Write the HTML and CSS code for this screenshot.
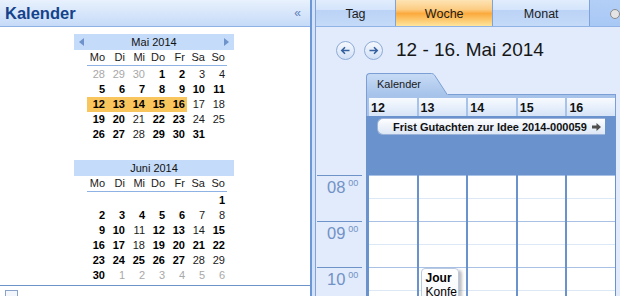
FILE: index.html
```html
<!DOCTYPE html>
<html lang="de">
<head>
<meta charset="UTF-8">
<title>Kalender</title>
<link rel="stylesheet" href="styles.css">
</head>
<body>
<div class="app">
    <aside class="nav-pane">
        <div class="pane-head">
            <span class="pane-title">Kalender</span>
            <span class="collapse">&laquo;</span>
        </div>
        <div class="months">
            <div class="mini">
                <div class="mini-head"><span class="arr arr-l"></span><span>Mai 2014</span><span class="arr arr-r"></span></div>
                <div class="mini-names"><span>Mo</span><span>Di</span><span>Mi</span><span>Do</span><span>Fr</span><span>Sa</span><span>So</span></div>
                <div class="mini-days">
                    <span class="g">28</span><span class="g">29</span><span class="g">30</span><span class="b">1</span><span class="b">2</span><span>3</span><span>4</span>
                    <span class="b">5</span><span class="b">6</span><span class="b">7</span><span class="b">8</span><span class="b">9</span><span class="b">10</span><span class="b">11</span>
                    <span class="b sel">12</span><span class="b sel">13</span><span class="b sel">14</span><span class="b sel">15</span><span class="b sel">16</span><span>17</span><span>18</span>
                    <span class="b">19</span><span class="b">20</span><span>21</span><span class="b">22</span><span class="b">23</span><span>24</span><span>25</span>
                    <span class="b">26</span><span class="b">27</span><span>28</span><span class="b">29</span><span class="b">30</span><span class="b">31</span><span></span>
                </div>
            </div>
            <div class="mini">
                <div class="mini-head"><span class="arr arr-l hide"></span><span>Juni 2014</span><span class="arr arr-r hide"></span></div>
                <div class="mini-names"><span>Mo</span><span>Di</span><span>Mi</span><span>Do</span><span>Fr</span><span>Sa</span><span>So</span></div>
                <div class="mini-days">
                    <span></span><span></span><span></span><span></span><span></span><span></span><span class="b">1</span>
                    <span class="b">2</span><span class="b">3</span><span class="b">4</span><span class="b">5</span><span class="b">6</span><span>7</span><span>8</span>
                    <span class="b">9</span><span class="b">10</span><span>11</span><span class="b">12</span><span class="b">13</span><span>14</span><span class="b">15</span>
                    <span class="b">16</span><span class="b">17</span><span>18</span><span class="b">19</span><span class="b">20</span><span class="b">21</span><span class="b">22</span>
                    <span class="b">23</span><span class="b">24</span><span class="b">25</span><span class="b">26</span><span class="b">27</span><span>28</span><span>29</span>
                    <span class="b">30</span><span class="g">1</span><span class="g">2</span><span class="g">3</span><span class="g">4</span><span class="g">5</span><span class="g">6</span>
                </div>
            </div>
        </div>
        <div class="pane-foot"><span class="foot-box"></span></div>
    </aside>

    <div class="splitter"></div>

    <main class="view">
        <div class="tabs">
            <div class="tab tab-day">Tag</div>
            <div class="tab tab-week active">Woche</div>
            <div class="tab tab-month">Monat</div>
            <div class="tab tab-more"><span class="more-icon"></span></div>
        </div>

        <div class="range">
            <span class="round-btn">
                <svg width="17" height="17" viewBox="0 0 17 17"><path d="M12.5 8.5H5 M8 5.3L4.8 8.5L8 11.7" fill="none" stroke="#35609f" stroke-width="1.6"/></svg>
            </span>
            <span class="round-btn">
                <svg width="17" height="17" viewBox="0 0 17 17"><path d="M4.5 8.5H12 M9 5.3L12.2 8.5L9 11.7" fill="none" stroke="#35609f" stroke-width="1.6"/></svg>
            </span>
            <span class="range-text">12 - 16. Mai 2014</span>
        </div>

        <div class="week">
            <div class="times">
                <div class="hour">08<sup>00</sup></div>
                <div class="hour">09<sup>00</sup></div>
                <div class="hour">10<sup>00</sup></div>
            </div>
            <div class="days-col">
                <div class="cal-tab">
                    <div class="tab-body">Kalender</div>
                    <svg class="tab-slant" width="18" height="22" viewBox="0 0 18 22">
                        <defs>
                            <linearGradient id="tabg" x1="0" y1="0" x2="0" y2="1">
                                <stop offset="0" stop-color="#c7dbf5"/>
                                <stop offset="1" stop-color="#a7c3ea"/>
                            </linearGradient>
                        </defs>
                        <path d="M0 0.5H1.5Q3.5 0.5 4.6 2.2L17.5 22H0Z" fill="url(#tabg)"/>
                        <path d="M0 0.5H1.5Q3.5 0.5 4.6 2.2L17.5 22" fill="none" stroke="#7b9fd4"/>
                    </svg>
                    <div class="tab-line"></div>
                </div>
                <div class="week-head">
                    <div class="dh">12</div>
                    <div class="dh">13</div>
                    <div class="dh">14</div>
                    <div class="dh">15</div>
                    <div class="dh">16</div>
                </div>
                <div class="allday">
                    <div class="ad"></div>
                    <div class="ad"></div>
                    <div class="ad"></div>
                    <div class="ad"></div>
                    <div class="ad"></div>
                    <div class="event">
                        <span>Frist Gutachten zur Idee 2014-000059</span>
                        <svg class="event-arrow" width="9" height="8" viewBox="0 0 9 8"><path d="M0 2.5H4.5V0L9 4L4.5 8V5.5H0Z" fill="#4f4f4f"/></svg>
                    </div>
                </div>
                <div class="slots">
                    <div class="slot"></div>
                    <div class="slot">
                        <div class="appt">
                            <div class="appt-line"><b>Jour</b></div>
                            <div class="appt-line">Konfe</div>
                        </div>
                    </div>
                    <div class="slot"></div>
                    <div class="slot"></div>
                    <div class="slot"></div>
                </div>
            </div>
        </div>
    </main>
</div>
</body>
</html>
```

FILE: styles.css
```css
html, body {
    margin: 0;
    padding: 0;
}

body {
    font-family: "Liberation Sans", Arial, sans-serif;
    color: #1a1a1a;
    background: #e1ebfb;
}

.app {
    display: flex;
    width: 620px;
    height: 296px;
    overflow: hidden;
}

/* left navigation pane */
.nav-pane {
    width: 310px;
    flex: none;
    display: flex;
    flex-direction: column;
    background: #fff;
    border-right: 2px solid #6b97d6;
}

.pane-head {
    height: 26px;
    flex: none;
    display: flex;
    align-items: center;
    justify-content: space-between;
    padding: 0 9px 0 5px;
    border-bottom: 1px solid #8db2e3;
    background: linear-gradient(#e8f1fd, #c6dbf8);
}

.pane-title {
    font-size: 16.5px;
    font-weight: bold;
    color: #15428b;
}

.collapse {
    font-size: 12px;
    color: #5d80b7;
}

.months {
    height: 258px;
    flex: none;
    box-sizing: border-box;
    padding-top: 7px;
}

.mini {
    width: 160px;
    margin: 0 0 3px 74px;
    font-size: 11px;
}

.mini-head {
    height: 16px;
    display: flex;
    align-items: center;
    justify-content: space-between;
    padding: 0 5px;
    background: #c4dbf9;
    color: #111;
}

.arr {
    width: 0;
    height: 0;
    border-top: 4px solid transparent;
    border-bottom: 4px solid transparent;
}

.arr-l {
    border-right: 5px solid #6e93cb;
}

.arr-r {
    border-left: 5px solid #6e93cb;
}

.hide {
    visibility: hidden;
}

.mini-names,
.mini-days {
    display: grid;
    grid-template-columns: repeat(7, 20px);
    width: 140px;
    margin-left: 13px;
}

.mini-names {
    border-bottom: 1px solid #8db2e3;
}

.mini-days {
    grid-template-rows: repeat(6, 15px);
    padding-top: 1px;
}

.mini-names span,
.mini-days span {
    text-align: right;
    padding-right: 2px;
    line-height: 15px;
}

.mini-days .b {
    font-weight: bold;
    color: #000;
}

.mini-days .g {
    color: #a8a8a8;
}

.mini-days .sel {
    background: #f9c55d;
}

.pane-foot {
    flex: 1;
    border-top: 1px solid #6d93c9;
    padding: 4px 5px;
}

.foot-box {
    display: block;
    width: 11px;
    height: 9px;
    border: 1px solid #8aa3c8;
    background: #f3f6fb;
}

.splitter {
    width: 3px;
    flex: none;
    background: #d3e2f7;
}

/* right view */
.view {
    flex: 1;
    display: flex;
    flex-direction: column;
    border-left: 1px solid #7ea2d9;
    background: #e1ebfb;
    overflow: hidden;
}

.tabs {
    height: 26px;
    flex: none;
    display: flex;
    border-bottom: 1px solid #8fb3e4;
}

.tab {
    box-sizing: border-box;
    border-right: 1px solid #7ea2d9;
    background: linear-gradient(#e1edfd, #d4e4fb 38%, #bbd3f6 40%, #c4daf8);
    font-size: 12.5px;
    line-height: 28px;
    text-align: center;
    color: #1c1c1c;
}

.tab-day {
    width: 82px;
}

.tab-week {
    width: 100px;
}

.tab-month {
    width: 99px;
}

.tab.active {
    background: linear-gradient(#fde3b4, #fccd84 36%, #fbaa3d 52%, #fee59c);
}

.tab-more {
    flex: 1;
    border-right: none;
    background: linear-gradient(#b3cff7, #a8c8f5);
}

.more-icon {
    display: block;
    width: 8px;
    height: 8px;
    margin: 9px 0 0 20px;
    border: 1px solid #8a8a8a;
    border-radius: 50%;
    background: #e4e4e4;
}

.range {
    height: 46px;
    flex: none;
    display: flex;
    align-items: center;
    padding-left: 20px;
}

.round-btn {
    width: 17px;
    height: 17px;
    border: 1px solid #8eaad6;
    border-radius: 50%;
    background: linear-gradient(#f6f9fe, #d2e1f6);
    display: flex;
    margin-right: 9px;
}

.range-text {
    margin-left: 4px;
    font-size: 19px;
    color: #161616;
}

.week {
    flex: 1;
    display: flex;
}

.times {
    width: 50px;
    flex: none;
    padding-top: 102px;
}

.hour {
    height: 46px;
    box-sizing: border-box;
    margin: 0 4px 0 1px;
    padding: 2px 0 0 10px;
    border-top: 1px solid #6d93c9;
    font-size: 16.5px;
    line-height: 18px;
    color: #7292c6;
}

.hour sup {
    font-size: 9px;
    line-height: 10px;
    vertical-align: top;
    margin-left: 3px;
}

.days-col {
    width: 250px;
    flex: none;
    display: flex;
    flex-direction: column;
}

.cal-tab {
    height: 22px;
    display: flex;
}

.tab-body {
    width: 53px;
    padding-left: 10px;
    border: 1px solid #7b9fd4;
    border-right: none;
    border-bottom: none;
    border-radius: 4px 0 0 0;
    background: linear-gradient(#c7dbf5, #a7c3ea);
    font-size: 11px;
    line-height: 20px;
}

.tab-slant {
    display: block;
    flex: none;
}

.tab-line {
    flex: 1;
    border-bottom: 1px solid #7b9fd4;
}

.week-head {
    display: grid;
    grid-template-columns: repeat(5, 1fr);
    column-gap: 2px;
    padding: 3px 0 0 2px;
    border-left: 1px solid #7b9fd4;
    border-right: 1px solid #7b9fd4;
    background: #a7c3ea;
}

.dh {
    height: 18px;
    padding-left: 2px;
    background: linear-gradient(#f8fbff, #d6e4f7);
    font-size: 12.5px;
    font-weight: bold;
    line-height: 20px;
    color: #111;
}

.allday,
.slots {
    display: grid;
    grid-template-columns: repeat(5, 1fr);
    column-gap: 2px;
    padding: 0 1px 0 3px;
    background: #6a93ce;
}

.allday {
    height: 57px;
}

.ad {
    grid-row: 1;
    background: #a5c0e3;
}

.event {
    grid-row: 1;
    grid-column: 1 / -1;
    align-self: start;
    justify-self: stretch;
    height: 15px;
    margin: 2px 0 0 8px;
    display: flex;
    align-items: center;
    padding-left: 15px;
    border: 1px solid #9bb3d8;
    border-right: none;
    border-radius: 6px 0 0 6px;
    background: linear-gradient(#fdfeff, #dde7f5);
    font-size: 11px;
    font-weight: bold;
    color: #111;
}

.event-arrow {
    margin-left: auto;
    margin-right: 4px;
}

.slots {
    flex: 1;
    padding-top: 2px;
}

.slot {
    background: repeating-linear-gradient(#a8c1e4 0 1px, #fff 1px 23px, #dde8f6 23px 24px, #fff 24px 46px);
}

.appt {
    width: 32px;
    height: 40px;
    margin: 93px 0 0 2px;
    padding: 2px 0 0 4px;
    overflow: hidden;
    border: 1px solid #b8c9e2;
    border-radius: 4px;
    background: linear-gradient(#fff, #f1f4f8);
    box-shadow: 3px 2px 3px rgba(0, 0, 0, 0.25);
    font-size: 12px;
    line-height: 14px;
    color: #000;
}

.appt-line {
    white-space: nowrap;
}
```
